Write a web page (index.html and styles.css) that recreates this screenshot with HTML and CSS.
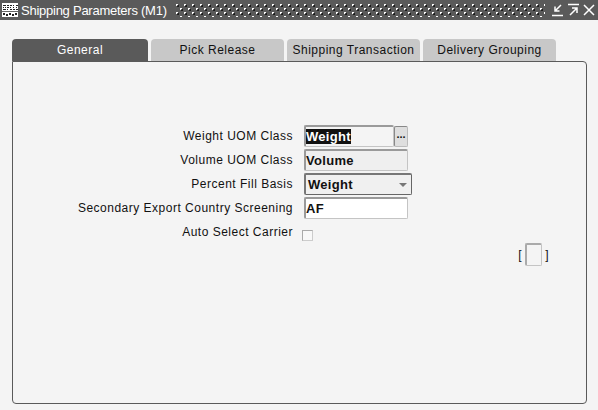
FILE: index.html
```html
<!DOCTYPE html>
<html lang="en">
<head>
    <meta charset="UTF-8">
    <title>Shipping Parameters (M1)</title>
    <link rel="stylesheet" href="styles.css">
</head>
<body>

<header class="titlebar">
    <svg class="app-icon" width="16" height="14" viewBox="0 0 16 14" shape-rendering="crispEdges">
        <rect width="16" height="14" fill="#fff"/>
        <path d="M1 2.500h3M1 4.500h1M3 4.500h1M1 6.500h3M5 2.500h2M5 4.500h2M5 6.500h1M8 2.500h2M8 4.500h1M8 6.500h2M11 2.500h1M11 4.500h1M11 6.500h2M14 2.500h2M14 4.500h1M14 6.500h2" stroke="#222" fill="none"/>
        <rect y="8" width="16" height="1" fill="#666"/>
        <path d="M1 11h2M4 12h2M7 11h2M10 12h2M13 11h2" stroke="#222" stroke-width="2" fill="none"/>
    </svg>
    <span class="window-title">Shipping Parameters (M1)</span>
    <svg class="grip" height="13" shape-rendering="crispEdges">
        <defs>
            <pattern id="gripDots" width="8" height="8" patternUnits="userSpaceOnUse">
                <path d="M0 0h2v1h-1v1h-1z" fill="#fff"/>
                <path d="M2 1h1v2h-2v-1h1z" fill="#1c1c1c"/>
                <path d="M4 4h2v1h-1v1h-1z" fill="#fff"/>
                <path d="M6 5h1v2h-2v-1h1z" fill="#1c1c1c"/>
            </pattern>
        </defs>
        <rect width="100%" height="100%" fill="url(#gripDots)"/>
    </svg>
    <div class="window-controls">
        <svg width="14" height="14" viewBox="0 0 14 14"><path d="M1 12.500h11M10 2L4 8M4 3.500V8h4.500" stroke="#fff" stroke-width="1.500" fill="none"/></svg>
        <svg width="14" height="14" viewBox="0 0 14 14"><path d="M1 1.500h11M3 12l7-7M5 5h5v5" stroke="#fff" stroke-width="1.500" fill="none"/></svg>
        <svg width="12" height="14" viewBox="0 0 12 14"><path d="M1 2l10 10M11 2L1 12" stroke="#fff" stroke-width="1.500" fill="none"/></svg>
    </div>
</header>

<main class="content">
    <nav class="tabs">
        <div class="tab tab-active">General</div>
        <div class="tab">Pick Release</div>
        <div class="tab">Shipping Transaction</div>
        <div class="tab">Delivery Grouping</div>
    </nav>

    <section class="panel">
        <div class="form">
            <label class="form-label">Weight UOM Class</label>
            <div class="field-row">
                <div class="field field-lov"><span class="selected">Weight</span></div>
                <button class="lov-btn">...</button>
            </div>

            <label class="form-label">Volume UOM Class</label>
            <div class="field field-readonly">Volume</div>

            <label class="form-label">Percent Fill Basis</label>
            <div class="field field-select">
                <span>Weight</span>
                <span class="arrow"></span>
            </div>

            <label class="form-label">Secondary Export Country Screening</label>
            <div class="field field-white">AF</div>

            <label class="form-label form-label-check">Auto Select Carrier</label>
            <div class="check"></div>
        </div>

        <div class="context-row">
            <span>[</span>
            <div class="context-box"></div>
            <span>]</span>
        </div>
    </section>
</main>

</body>
</html>
```

FILE: styles.css
```css
body {
    margin: 0;
    width: 598px;
    height: 410px;
    overflow: hidden;
    background-color: #f4f4f4;
    font-family: "Liberation Sans", Arial, sans-serif;
    font-size: 12px;
    letter-spacing: 0.5px;
    color: #111;
}
.titlebar {
    display: flex;
    align-items: center;
    height: 20px;
    padding-left: 2px;
    background-color: #5a5a5a;
    color: white;
}
.app-icon {
    flex: none;
}
.window-title {
    margin-left: 3px;
    font-size: 13px;
    letter-spacing: -0.25px;
    white-space: nowrap;
}
.grip {
    flex: 1;
    min-width: 0;
    margin: 1px 6px 0 9px;
}
.window-controls {
    display: flex;
    gap: 2px;
    align-items: center;
    padding-right: 3px;
}
.content {
    padding: 19px 11px 0 12px;
}
.tabs {
    display: flex;
    gap: 3px;
    height: 22px;
}
.tab {
    width: 133px;
    line-height: 23px;
    text-align: center;
    background-color: #c8c8c8;
    border-radius: 4px 4px 0 0;
}
.tab-active {
    width: 136px;
    background-color: #5a5a5a;
    color: white;
}
.panel {
    height: 343px;
    box-sizing: border-box;
    border: 1px solid #5a5a5a;
    border-radius: 0 4px 4px 4px;
    padding-top: 63px;
}
.form {
    display: grid;
    grid-template-columns: 280px auto;
    justify-content: start;
    column-gap: 11px;
    row-gap: 2px;
    align-items: center;
}
.form-label {
    text-align: right;
    white-space: nowrap;
}
.form-label-check {
    align-self: start;
    margin-top: 4px;
}
.field-row {
    display: flex;
}
.field {
    box-sizing: border-box;
    height: 22px;
    width: 104px;
    border: 1px solid #c4c4c4;
    border-top: 2px solid #9a9a9a;
    border-left: 2px solid #9a9a9a;
    border-radius: 2px;
    font-size: 13px;
    font-weight: bold;
    letter-spacing: 0.3px;
    line-height: 19px;
}
.field-lov {
    width: 90px;
}
.selected {
    background-color: #111;
    color: white;
}
.field-readonly {
    background-color: #efefef;
}
.field-white {
    background-color: white;
}
.field-select {
    display: flex;
    align-items: center;
    justify-content: space-between;
    width: 108px;
    padding: 0 4px 0 2px;
    background-color: #f0f0f0;
    border: 1px solid #666;
    border-top: 2px solid #777;
    border-left: 2px solid #777;
}
.arrow {
    border-left: 4px solid transparent;
    border-right: 4px solid transparent;
    border-top: 4px solid #777;
}
.lov-btn {
    box-sizing: border-box;
    width: 14px;
    height: 21px;
    margin-top: 1px;
    padding: 0 0 6px;
    background-color: #dedede;
    border: 1px solid #888;
    border-right-color: #bbb;
    border-bottom-color: #bbb;
    border-radius: 2px;
    font-family: "Liberation Sans", Arial, sans-serif;
    font-size: 11px;
    font-weight: bold;
    letter-spacing: 0;
    color: #111;
}
.check {
    box-sizing: border-box;
    align-self: start;
    width: 11px;
    height: 11px;
    margin: 9px 0 0 -2px;
    background-color: #f8f8f8;
    border: 1px solid #aaa;
    border-right-color: #ccc;
    border-bottom-color: #ccc;
}
.context-row {
    display: flex;
    justify-content: flex-end;
    align-items: center;
    gap: 3px;
    margin-top: 2px;
    padding-right: 37px;
}
.context-box {
    box-sizing: border-box;
    width: 17px;
    height: 23px;
    border: 1px solid #c4c4c4;
    border-top: 2px solid #aaa;
    border-left: 2px solid #aaa;
    border-radius: 2px;
}
```
